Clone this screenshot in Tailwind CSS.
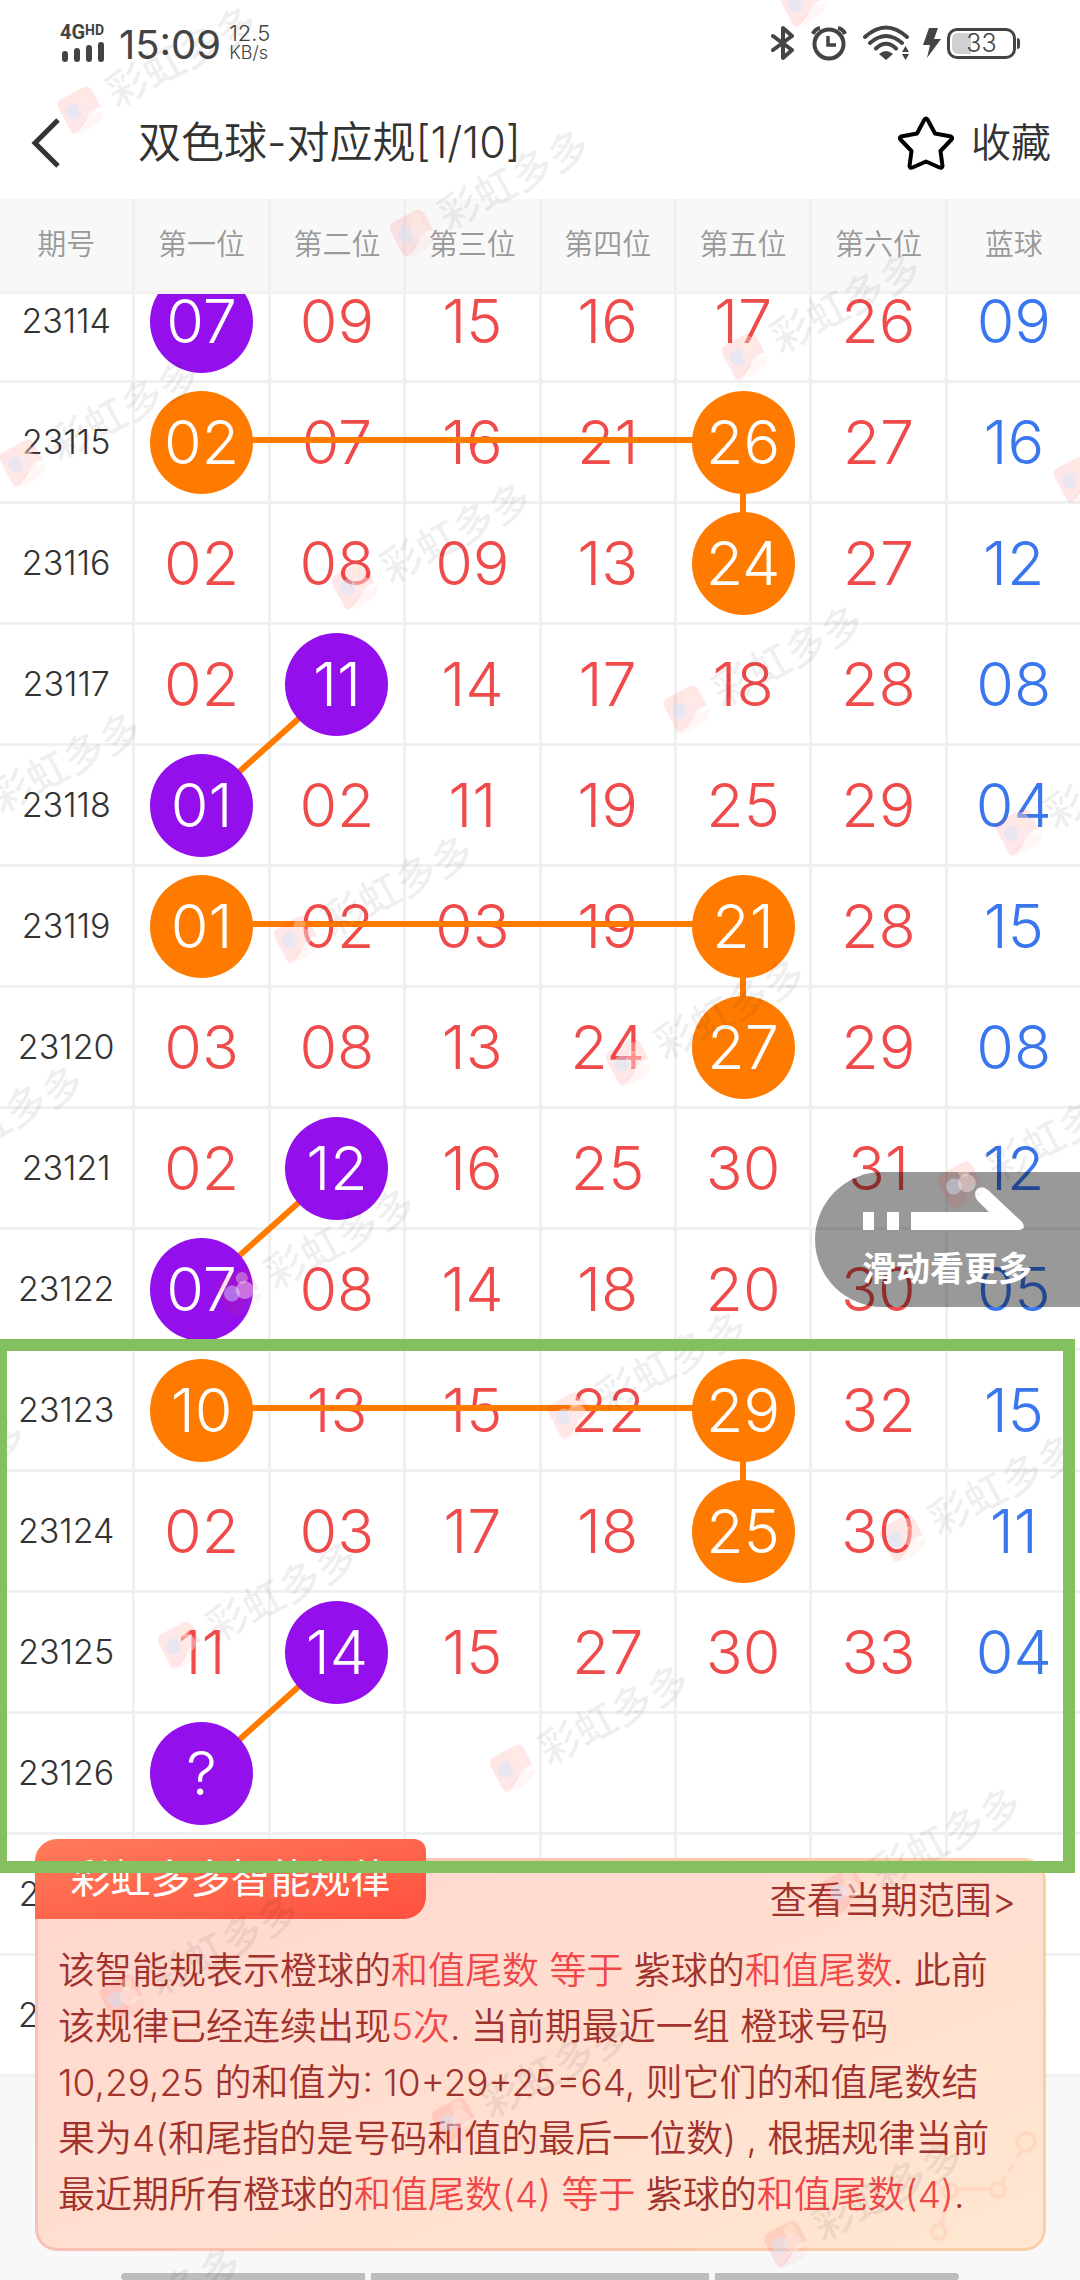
<!DOCTYPE html>
<html lang="zh-CN">

<head>
    <meta charset="UTF-8">
    <meta name="viewport" content="width=device-width, initial-scale=1">
    <title>双色球-对应规</title>
    <script src="https://cdn.jsdelivr.net/npm/@tailwindcss/browser@4"></script>
</head>

<body class="bg-[#f8f8f8] font-['Inter','Noto_Sans_CJK_SC',sans-serif] font-[350] text-[#333]">
    <div class="relative min-h-screen overflow-hidden">

        <!-- status bar -->
        <div class="flex h-[86px] items-center justify-between bg-white pr-[64px] pl-[60px] text-[#444]">
            <div class="flex items-center">
                <div class="w-[46px]">
                    <div class="flex items-start font-['Roboto'] leading-none font-bold">
                        <span class="text-[20px] leading-[15px]">4G</span><span class="text-[14px] leading-[10px]">HD</span>
                    </div>
                    <svg class="mt-[2px] ml-[2px]" width="43" height="20" viewBox="0 0 43 20" fill="#444">
                        <rect x="0" y="9" width="6" height="11" rx="3" />
                        <rect x="12" y="6" width="6" height="14" rx="3" />
                        <rect x="24" y="3" width="6" height="17" rx="3" />
                        <rect x="36" y="0" width="6" height="20" rx="3" />
                    </svg>
                </div>
                <span class="ml-[13px] pt-[4px] text-[40px] leading-none font-normal">15:09</span>
                <div class="ml-[8px]">
                    <div class="text-[22px] leading-[20px]">12.5</div>
                    <div class="text-[18px] leading-[20px]">KB/s</div>
                </div>
            </div>
            <div class="flex items-center">
                <svg width="24" height="36" viewBox="0 0 24 36" fill="none" stroke="#444" stroke-width="4" stroke-linecap="round" stroke-linejoin="round">
                    <path d="M2 11L21 25L12 33V3L21 11L2 25" />
                </svg>
                <svg class="ml-[16px]" width="36" height="36" viewBox="0 0 36 36" fill="none" stroke="#444" stroke-width="4">
                    <circle cx="18" cy="19" r="14.5" />
                    <path d="M17 11V20H25" stroke-width="3.5" />
                    <path d="M2 9Q4 4 9 3M34 9Q32 4 27 3" stroke-width="4" />
                </svg>
                <svg class="ml-[16px]" width="48" height="36" viewBox="0 0 48 36" fill="none" stroke="#444" stroke-width="4" stroke-linecap="round">
                    <path d="M2 12Q23 -7 44 12M7 18Q23 4 39 18M13 23.500Q23 14 33 23.500" />
                    <path d="M16 29Q23 23 30 29L23 35Z" fill="#444" stroke="none" />
                    <path d="M39 27L42.500 21L46 27ZM39 29L42.500 35L46 29Z" fill="#444" stroke="none" />
                </svg>
                <svg class="ml-[12px]" width="18" height="30" viewBox="0 0 18 30" fill="#444">
                    <path d="M6 0H15L11 11H18L4 30L7 17H0Z" />
                </svg>
                <div class="relative ml-[6px] flex h-[31px] w-[69px] items-center justify-center rounded-[10px] border-3 border-[#444]">
                    <div class="absolute top-[2px] left-[2px] h-[21px] w-[19px] rounded-l-[6px] bg-[#d0d0d0]"></div>
                    <span class="relative text-[25px] leading-none">33</span>
                    <div class="absolute top-[7px] -right-[7px] h-[11px] w-[3px] rounded-r-full bg-[#444]"></div>
                </div>
            </div>
        </div>

        <!-- title bar -->
        <header class="flex h-[113px] items-center bg-white pr-[29px] pl-[30px]">
            <button type="button" aria-label="返回" class="mr-[77px]">
                <svg width="31" height="52" viewBox="0 0 31 52" fill="none" stroke="#333" stroke-width="5">
                    <path d="M28 3L5 26L28 49" />
                </svg>
            </button>
            <h1 class="grow text-[43px] leading-none">双色球-对应规[1/10]</h1>
            <button type="button" class="flex items-center gap-[17px] text-[40px] leading-none">
                <svg width="56" height="54" viewBox="0 0 56 54" fill="none" stroke="#000" stroke-width="4" stroke-linejoin="round">
                    <path d="M26.500 3.500Q28 1.500 29.500 3.500L37 17.500L53 20.500Q55 22 53.500 23.500L42.500 35L44.500 50Q44 52.500 41.500 51.500L28 45.500L14.500 51.500Q12 52.500 11.500 50L13.500 35L2.500 23.500Q1 22 3 20.500L19 17.500Z" />
                </svg>
                收藏
            </button>
        </header>

        <!-- column heads -->
        <div class="overflow-hidden border-b-3 border-[#f0f0f0] bg-[#f8f8f8]">
            <div class="flex h-[92px] w-[calc(100%+3px)] text-[29px] text-[#999]" id="heads"></div>
        </div>

        <!-- trend table -->
        <div class="relative overflow-hidden">
            <table class="-mt-[32px] w-[calc(100%+3px)] table-fixed border-separate border-spacing-0 bg-white">
                <tbody id="rows"></tbody>
            </table>
            <button type="button" class="absolute top-[878px] right-0 z-30 flex h-[135px] w-[265px] flex-col items-start rounded-l-full bg-black/40 pt-[14px] pl-[47px] text-[34px] leading-[40px] font-bold text-white">
                <svg class="mb-[15px]" width="164" height="48" viewBox="0 0 164 48" fill="#fff">
                    <path d="M1 26H12V44H1ZM25 26H37V44H25ZM49 26H127L115 14Q111 8 115 3Q120 -1 126 4L160 36Q165 43 157 44H49Z" />
                </svg>
                滑动看更多
            </button>
        </div>

        <!-- rule card -->
        <section class="absolute right-[34px] bottom-[29px] left-[35px] rounded-[22px] bg-linear-to-r from-[#f9bfb5] to-[#fbcfa6] p-[3px]">
            <div class="relative rounded-[19px] bg-linear-to-br from-[#ffd6cf] to-[#ffe7d1] pb-[25px] text-[#a1322c]">
                <svg class="absolute right-[2px] bottom-[2px]" width="112" height="120" viewBox="0 0 112 120" fill="none" stroke="#ffd8c2" stroke-width="4">
                    <circle cx="97" cy="16" r="9" />
                    <circle cx="69" cy="64" r="7" />
                    <circle cx="21" cy="65" r="7" />
                    <circle cx="10" cy="106" r="7" />
                    <path d="M28 63H62M19 72L12 99" />
                    <path d="M92 25L73 57" stroke-dasharray="9 6" />
                </svg>
                <div class="flex justify-end pt-[12px] pr-[27px] pb-[14px]">
                    <a href="#" class="text-[37px] leading-[56px]">查看当期范围&gt;</a>
                </div>
                <p class="relative pl-[20px] text-[37px] leading-[56px] whitespace-nowrap">
                    该智能规表示橙球的<span class="text-[#f04848]">和值尾数 等于</span> 紫球的<span class="text-[#f04848]">和值尾数</span>. 此前<br>
                    该规律已经连续出现<span class="text-[#f04848]">5次</span>. 当前期最近一组 橙球号码<br>
                    10,29,25 的和值为: 10+29+25=64, 则它们的和值尾数结<br>
                    果为4(和尾指的是号码和值的最后一位数) , 根据规律当前<br>
                    最近期所有橙球的<span class="text-[#f04848]">和值尾数(4) 等于</span> 紫球的<span class="text-[#f04848]">和值尾数(4)</span>.
                </p>
            </div>
            <h2 class="absolute -top-[19px] left-0 h-[80px] w-[391px] rounded-tl-[22px] rounded-tr-[12px] rounded-br-[22px] bg-linear-to-br from-[#ff7b5a] to-[#ff4f3f] text-center text-[40px] leading-[80px] font-normal text-white">彩虹多多智能规律</h2>
        </section>

        <!-- system navigation -->
        <div class="absolute inset-x-[121px] bottom-0 flex h-[7px] gap-[6px]">
            <div class="grow-[244] rounded-l-full bg-[#bdbdbd]"></div>
            <div class="grow-[338] bg-[#bdbdbd]"></div>
            <div class="grow-[244] rounded-r-full bg-[#bdbdbd]"></div>
        </div>

        <div id="marks" class="pointer-events-none absolute inset-0 z-40 overflow-hidden"></div>

        <!-- highlight frame -->
        <div class="pointer-events-none absolute top-[1339px] right-[5px] -left-[5px] z-50 h-[534px] border-12 border-[#84c060]"></div>
    </div>

    <script>
        const heads = ['期号', '第一位', '第二位', '第三位', '第四位', '第五位', '第六位', '蓝球'];
        // o = orange ball, p = purple ball; h / v / d = line to the right, down, up-right
        const rows = [
            ['23114', '07p', '09', '15', '16', '17', '26', '09'],
            ['23115', '02oh', '07', '16', '21', '26ov', '27', '16'],
            ['23116', '02', '08', '09', '13', '24o', '27', '12'],
            ['23117', '02', '11p', '14', '17', '18', '28', '08'],
            ['23118', '01pd', '02', '11', '19', '25', '29', '04'],
            ['23119', '01oh', '02', '03', '19', '21ov', '28', '15'],
            ['23120', '03', '08', '13', '24', '27o', '29', '08'],
            ['23121', '02', '12p', '16', '25', '30', '31', '12'],
            ['23122', '07pd', '08', '14', '18', '20', '30', '05'],
            ['23123', '10oh', '13', '15', '22', '29ov', '32', '15'],
            ['23124', '02', '03', '17', '18', '25o', '30', '11'],
            ['23125', '11', '14p', '15', '27', '30', '33', '04'],
            ['23126', '?pd', '', '', '', '', '', ''],
            ['23127', '', '', '', '', '', '', ''],
            ['23128', '', '', '', '', '', '', '']
        ];
        const lines = {
            h: '<i class="absolute top-[54px] left-1/2 z-10 h-[6px] w-[calc(400%+12px)] bg-[#ff7b00]"></i>',
            v: '<i class="absolute top-1/2 left-1/2 z-10 -ml-[3px] h-[121px] w-[6px] bg-[#ff7b00]"></i>',
            d: '<svg class="absolute bottom-1/2 left-1/2 z-10 h-[121px] w-[calc(100%+3px)]" viewBox="0 0 135 121" preserveAspectRatio="none"><path d="M0 121L135 0" stroke="#ff7b00" stroke-width="6" /></svg>'
        };

        document.getElementById('heads').innerHTML = heads.map(t =>
            `<div class="flex flex-1 items-center justify-center border-r-3 border-[#f0f0f0]">${t}</div>`).join('');

        function cell(value, i) {
            if (i === 0) {
                return `<th scope="row" class="h-[121px] border-r-3 border-b-3 border-[#f0f0f0] p-0 text-center text-[34px] leading-none font-[350]">${value}</th>`;
            }
            const text = value.replace(/[a-z]/g, '');
            const line = value.replace(/[^hvd]/g, '');
            let inner = text;
            if (value.includes('o')) {
                inner = `<span class="relative z-20 mx-auto flex size-[103px] items-center justify-center rounded-full bg-[#ff7b00] text-white">${text}</span>`;
            } else if (value.includes('p')) {
                inner = `<span class="relative z-20 mx-auto flex size-[103px] items-center justify-center rounded-full bg-[#9310ec] text-white">${text}</span>`;
            }
            const color = i === 7 ? 'text-[#3a76ee]' : 'text-[#f04b4b]';
            return `<td class="relative h-[121px] border-r-3 border-b-3 border-[#f0f0f0] p-0 text-center text-[61px] leading-none ${color}">${line ? lines[line] : ''}${inner}</td>`;
        }
        document.getElementById('rows').innerHTML = rows.map(r => `<tr>${r.map(cell).join('')}</tr>`).join('');

        // tiled watermark
        let marks = '';
        for (let j = -1; j <= 6; j++) {
            for (let i = 0; i <= 3; i++) {
                const x = 81 + i * 332 - j * 58;
                const y = 110 + i * 123 + j * 353;
                if (x < -190 || x > 1110 || y < -40) continue;
                marks += `<div class="absolute" style="left:${x}px;top:${y}px">
                    <div class="flex h-[48px] w-[210px] origin-[22px_24px] -translate-x-[22px] -translate-y-[24px] -rotate-28 items-center gap-[8px] text-[41px] leading-none font-medium whitespace-nowrap text-black/8">
                        <svg class="shrink-0" width="46" height="46" viewBox="0 0 46 46">
                            <path d="M11 4H33Q41 4 41 12V30Q34 26 26 31Q16 40 5 41Q3 40 3 36V12Q3 4 11 4Z" fill="#f22" fill-opacity=".11" />
                            <path d="M6 42Q20 28 42 34Q34 48 6 42Z" fill="#f64" fill-opacity=".05" />
                            <circle cx="15" cy="21" r="8" fill="#cfe4ff" fill-opacity=".45" />
                            <circle cx="28" cy="24" r="9" fill="#ffece8" fill-opacity=".45" />
                            <circle cx="31" cy="12" r="6" fill="#fff0dc" fill-opacity=".35" />
                        </svg>
                        <span>彩虹多多</span>
                    </div>
                </div>`;
            }
        }
        document.getElementById('marks').innerHTML = marks;
    </script>
</body>

</html>
